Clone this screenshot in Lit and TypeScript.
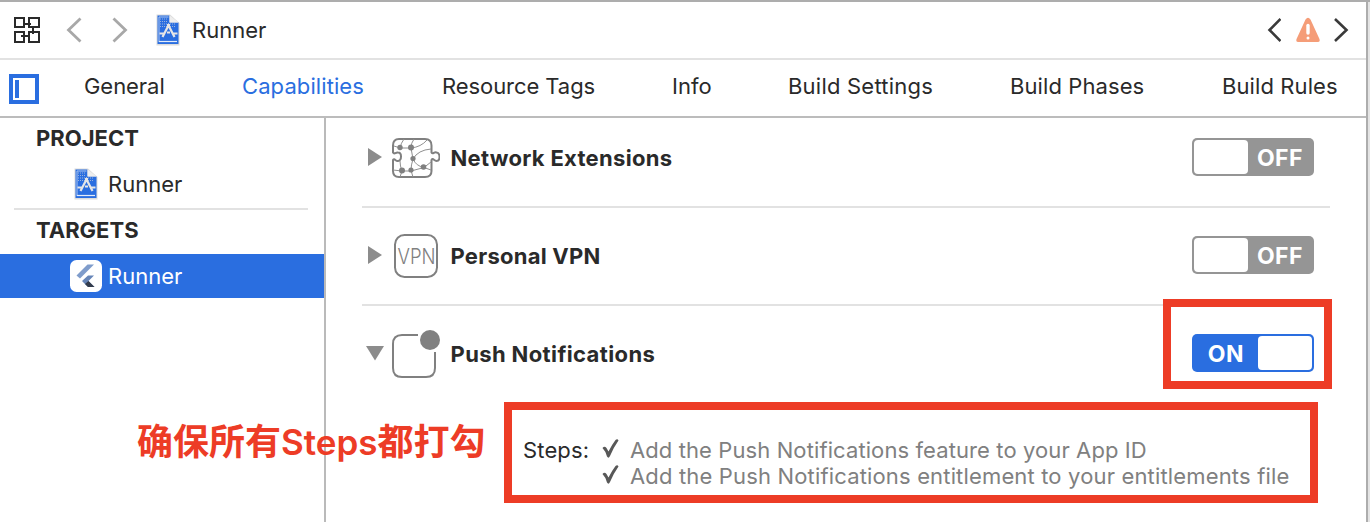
import { LitElement, html, css } from "lit";
import { customElement, property } from "lit/decorators.js";
import { classMap } from "lit/directives/class-map.js";
import { styleMap } from "lit/directives/style-map.js";

const TABS = [
  { label: "General", tracking: -0.05 },
  { label: "Capabilities", tracking: 0.09 },
  { label: "Resource Tags", tracking: -0.07 },
  { label: "Info", tracking: 0 },
  { label: "Build Settings", tracking: 0.22 },
  { label: "Build Phases", tracking: 0.09 },
  { label: "Build Rules", tracking: 0.1 },
];

const STEPS = [
  { text: "Add the Push Notifications feature to your App ID", tracking: 0.1 },
  { text: "Add the Push Notifications entitlement to your entitlements file", tracking: 0.16 },
];

const projectIcon = html`<svg width="24" height="32" viewBox="0 0 24 32">
  <path d="M.5.5H14L23.500 9V31.500H.5z" fill="#dcdcdc"/>
  <path d="M1.500 1.500H13.500V8.500H22.500V30H1.500z" fill="#2a6ee0"/>
  <path d="M13.500 1.500L22.500 8.500H13.500z" fill="#eeeeee"/>
  <path d="M3 28V3H12.500" fill="none" stroke="#a9c3ef"/>
  <path d="M3 27.500H21" stroke="#e4ecf9" stroke-width="1.200"/>
  <path d="M4 5H12M4 7.500H12M4 10H20M4 12.500H20" stroke="#9ab2dc" stroke-dasharray="1 1"/>
  <path d="M6.500 23L12.500 11.500L18.500 23M11 11h3M3.500 19.500H9M11 18.500H14M16 19.500H21.500" fill="none" stroke="#e6e6e6" stroke-width="2.200"/>
</svg>`;

const flutterIcon = html`<svg width="32" height="32" viewBox="0 0 32 32">
  <rect width="32" height="32" rx="6.500" fill="#fff"/>
  <path d="M6.500 15.500L17.500 4.500H24L10 18.500z" fill="#7f9ccb"/>
  <path d="M12 21L18 15.500H24L18.500 21L24.500 27H18z" fill="#6685b8"/>
  <path d="M15 24L18.500 21L24.500 27H18z" fill="#333c4c"/>
</svg>`;

const networkIcon = html`<svg width="50" height="42" viewBox="-1 0 50 42" fill="none" stroke="#808080">
  <path d="M8 2H34Q40.500 2 40.500 8.500V15.500C42 18 43 14.500 45.500 15.500C49.500 16 49.500 24 45.500 24C43 24 42 20.500 40.500 23V34Q40.500 40 34 40H8Q2 40 2 34V23C3.500 20.500 4.500 24.500 7 24C11 23.500 11 15.500 7 15.500C4.500 15 3.500 18 2 15.500V8.500Q2 2 8 2z" stroke-width="2"/>
  <path d="M13 2Q10 6 9 11L3 9M9 11H20M23 2Q20 6 20 11Q30 10 36 3M20 11L22 22Q25 29 33 30.500L40 33M40 12Q27 13 22 22Q20 28 20 33.500M9 24Q9 29 11 34H20L33 30.500M2 33L11 34L9 40M20 33.500L22 40M33 30.500L40 25" stroke="#909090" stroke-width="1"/>
  <g fill="#808080" stroke="none"><circle cx="9" cy="10.500" r="2.700"/><circle cx="20" cy="10.500" r="3"/><circle cx="22" cy="21.500" r="2.600"/><circle cx="11" cy="33.500" r="3"/><circle cx="20" cy="33" r="2.600"/><circle cx="32.500" cy="30" r="2.800"/></g>
</svg>`;

const vpnIcon = html`<svg width="50" height="46" viewBox="0 0 50 46" overflow="visible">
  <rect x="5" y="2" width="42" height="42" rx="9.500" fill="none" stroke="#808080" stroke-width="2"/>
  <text x="26.500" y="31" text-anchor="middle" textLength="38" lengthAdjust="spacingAndGlyphs" font-family="Inter, sans-serif" font-weight="300" font-size="22" fill="#808080">VPN</text>
</svg>`;

const pushIcon = html`<svg width="50" height="50" viewBox="0 0 50 50">
  <path d="M28 6H12Q3 6 3 15V39Q3 48 12 48H36Q45 48 45 39V23" fill="none" stroke="#808080" stroke-width="2"/>
  <circle cx="40" cy="11" r="10" fill="#808080"/>
</svg>`;

const check = html`<svg class="check" width="18" height="20" viewBox="0 0 18 20">
  <path d="M.5 9Q2.500 6.500 4.500 9L6.500 12.500Q10 5.500 13.500 1Q15.500 -.5 16.500 1.500Q11.500 8.500 8 17Q6.500 20 5 17.500Q3.500 12 .5 9z" fill="#585858"/>
</svg>`;

@customElement("switch-toggle")
class SwitchToggle extends LitElement {
  @property({ type: Boolean }) on = false;
  static styles = css`
    :host { display: block; width: 122px; height: 38px; }
    .track { box-sizing: border-box; width: 122px; height: 38px; padding: 2px; border-radius: 5px; background: #959595; display: flex; align-items: center; color: #fff; font: 700 23px/34px Inter, sans-serif; }
    .track.on { background: #2a6ee0; flex-direction: row-reverse; }
    .knob { width: 54px; height: 34px; border-radius: 4px; background: #fff; }
    .text { flex: 1; text-align: center; padding-top: 1px; letter-spacing: 0.5px; }
  `;
  render() {
    return html`<div class=${classMap({ track: true, on: this.on })}><div class="knob"></div><div class="text">${this.on ? "ON" : "OFF"}</div></div>`;
  }
}

@customElement("capability-row")
class CapabilityRow extends LitElement {
  @property() label = "";
  @property() icon = "";
  @property({ type: Number }) tracking = 0;
  @property({ type: Boolean }) on = false;
  static styles = css`
    :host { display: block; height: 96px; }
    .row { display: grid; grid-template-columns: 28px 60px 1fr 138px; height: 96px; align-items: center; }
    svg { display: block; }
    .arrow, switch-toggle { margin-bottom: 2px; }
    .name { font: 700 22px/28px Inter, sans-serif; color: #2a2a2a; padding: 0 0 1px 0.5px; }
  `;
  render() {
    const icons: Record<string, unknown> = { network: networkIcon, vpn: vpnIcon, push: pushIcon };
    return html`<div class="row">
      <svg class="arrow" width="28" height="20" viewBox="0 0 28 20"><path d=${this.on ? "M4 3H22L13 17.500z" : "M6 1L20 10L6 19z"} fill="#8c8c8c"/></svg>
      ${icons[this.icon]}
      <div class="name" style=${styleMap({ letterSpacing: `${this.tracking}px` })}>${this.label}</div>
      <switch-toggle ?on=${this.on}></switch-toggle>
    </div>`;
  }
}

@customElement("app-root")
class AppRoot extends LitElement {
  static styles = css`
    :host { display: block; width: 1370px; height: 522px; position: relative; overflow: hidden; background: #fff; color: #2a2a2a; font: 400 22px/28px Inter, sans-serif; }
    .window { box-sizing: border-box; height: 522px; border-top: 2px solid #adadad; display: grid; grid-template-columns: 1366px 2px 2px; }
    .edge { background: #adadad; }
    .outside { background: #e4e4e4; }
    .main { display: grid; grid-template-rows: 58px 58px 404px; }
    svg { display: block; }
    .path { box-sizing: border-box; border-bottom: 2px solid #e2e2e2; display: flex; align-items: center; padding: 0 17px 0 13px; }
    .back { margin-left: 25px; }
    .fwd { margin-left: 28px; }
    .file { margin-left: 26px; }
    .title { margin-left: 12px; flex: 1; }
    .issues { display: flex; gap: 13px; align-items: center; }
    .tabs { box-sizing: border-box; border-bottom: 2px solid #bcbcbc; display: grid; grid-template-columns: 84px 158px 200px 230px 116px 222px 212px 1fr; align-items: center; white-space: nowrap; }
    .toggle { padding: 1px 0 0 9px; }
    .tab { padding-bottom: 4px; }
    .active { color: #2a6ee0; }
    .body { display: grid; grid-template-columns: 324px 2px 1fr; }
    .divider { background: #bababa; }
    .heading { font-weight: 650; padding-left: 36px; height: 44px; line-height: 41px; box-sizing: border-box; }
    .item { display: flex; align-items: center; height: 44px; }
    .project { height: 46px; padding-left: 74px; gap: 10px; }
    .project svg { margin-bottom: 2px; }
    .project span { padding-bottom: 2px; }
    .rule { height: 2px; background: #e2e2e2; margin: 0 16px 0 14px; }
    .selected { background: #2a6ee0; color: #fff; padding-left: 70px; gap: 6px; }
    .list { padding: 0 36px; margin-top: -8px; }
    .sep { height: 2px; background: #e2e2e2; }
    .steps { display: grid; grid-template-columns: 79px 28px 1fr; padding-left: 161px; margin-top: 35px; line-height: 26px; }
    .lead { letter-spacing: 0.15px; }
    .done { color: #808080; white-space: nowrap; }
    .check { margin-top: 2px; }
    .box { position: absolute; box-sizing: border-box; border: 8px solid #ed3c26; }
    .box-switch { left: 1163px; top: 299px; width: 169px; height: 90px; }
    .box-steps { left: 504px; top: 402px; width: 814px; height: 101px; }
    .note { position: absolute; left: 137px; top: 418px; color: #ed3c26; font: 600 36px/48px Inter, "Noto Sans CJK SC", sans-serif; white-space: nowrap; }
    .latin { font-size: 35px; }
  `;
  render() {
    return html`<div class="window">
      <div class="main">
        <div class="path">
          <svg width="28" height="28" viewBox="0 0 28 28" fill="none" stroke="#2a2a2a" stroke-width="2"><path d="M2 2H11V11H2zM16 2H26V11H16zM2 16H11V26H2zM16 16H26V26H16zM11 8H18M20 11V18M8 20H16"/></svg>
          <svg class="back" width="18" height="26" viewBox="0 0 18 26" fill="none" stroke="#a8a8a8" stroke-width="2.800"><path d="M14.500 1.500L2.500 13L14.500 24.500"/></svg>
          <svg class="fwd" width="18" height="26" viewBox="0 0 18 26" fill="none" stroke="#a8a8a8" stroke-width="2.800"><path d="M1.500 1.500L13.500 13L1.500 24.500"/></svg>
          <div class="file">${projectIcon}</div>
          <div class="title">Runner</div>
          <div class="issues">
            <svg width="16" height="26" viewBox="0 0 16 26" fill="none" stroke="#3a3a3a" stroke-width="2.600"><path d="M15.500 2L4.500 13L15.500 24"/></svg>
            <svg width="26" height="26" viewBox="-1 0 26 26"><path d="M10.500 2.500Q13 -1 15.500 2.500L24 21Q26 25 22.500 25H3.500Q0 25 2 21z" fill="#f59d78"/><path d="M13 8.500V16" stroke="#fff" stroke-width="3.400" stroke-linecap="round"/><circle cx="13" cy="21" r="1.500" fill="#fff"/></svg>
            <svg width="16" height="26" viewBox="0 0 16 26" fill="none" stroke="#3a3a3a" stroke-width="2.600"><path d="M2 2L13.500 13L2 24"/></svg>
          </div>
        </div>
        <div class="tabs">
          <div class="toggle"><svg width="30" height="30" viewBox="0 0 30 30"><rect x="2" y="2" width="26" height="26" fill="none" stroke="#2a6ee0" stroke-width="4"/><path d="M6 6H10V24H6z" fill="#2a6ee0"/></svg></div>
          ${TABS.map((t) => html`<div class=${classMap({ tab: true, active: t.label === "Capabilities" })} style=${styleMap({ letterSpacing: `${t.tracking}px` })}>${t.label}</div>`)}
        </div>
        <div class="body">
          <div class="side">
            <div class="heading">PROJECT</div>
            <div class="item project">${projectIcon}<span>Runner</span></div>
            <div class="rule"></div>
            <div class="heading">TARGETS</div>
            <div class="item selected">${flutterIcon}<span>Runner</span></div>
          </div>
          <div class="divider"></div>
          <div class="list">
            <capability-row label="Network Extensions" icon="network" tracking="0.3"></capability-row>
            <div class="sep"></div>
            <capability-row label="Personal VPN" icon="vpn" tracking="0.25"></capability-row>
            <div class="sep"></div>
            <capability-row label="Push Notifications" icon="push" tracking="0.38" on></capability-row>
            <div class="steps">
              ${STEPS.map((s, i) => html`<span class="lead">${i === 0 ? "Steps:" : ""}</span>${check}<span class="done" style=${styleMap({ letterSpacing: `${s.tracking}px` })}>${s.text}</span>`)}
            </div>
          </div>
        </div>
      </div>
      <div class="edge"></div><div class="outside"></div>
    </div>
    <div class="box box-switch"></div>
    <div class="box box-steps"></div>
    <div class="note">确保所有<span class="latin">Steps</span>都打勾</div>`;
  }
}
